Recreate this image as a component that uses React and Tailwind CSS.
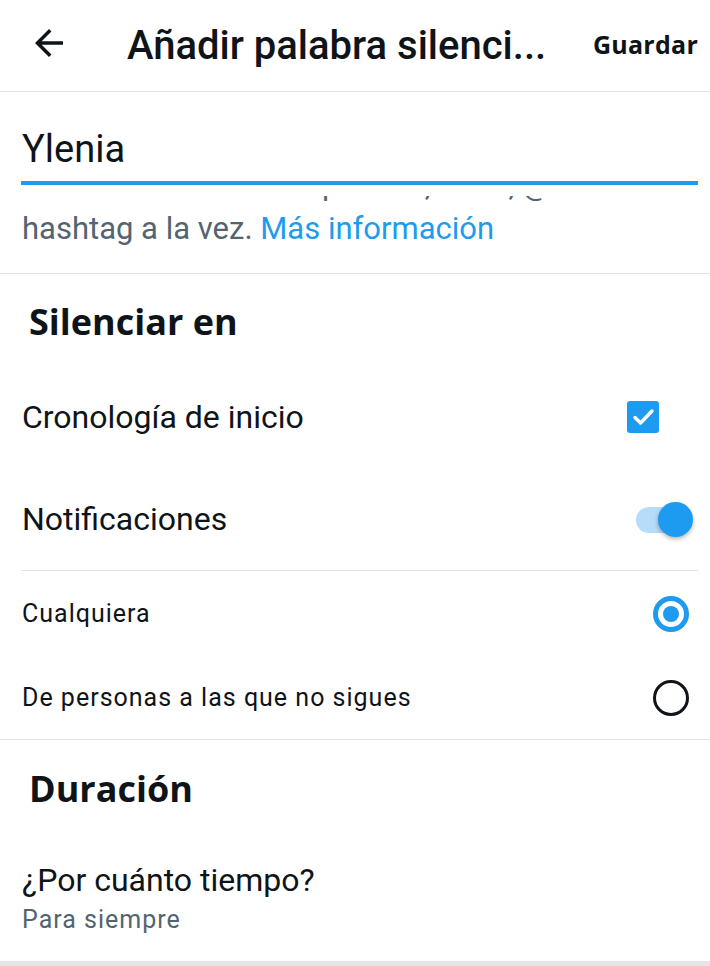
export default function App() {
  return (
    <div className="w-[710px] h-[966px] bg-white flex flex-col overflow-hidden text-[#0f1419] font-['Roboto',sans-serif]">
      <header className="h-[92px] shrink-0 flex items-center border-b border-[#dfe3e6]">
        <svg className="ml-[28px] mb-[5px] w-[42px] h-[42px] shrink-0" viewBox="0 0 24 24">
          <path d="M20 11H7.83l5.59-5.59L12 4l-8 8 8 8 1.41-1.41L7.83 13H20v-2z" fill="#0f1419" />
        </svg>
        <h1 className="ml-[57px] text-[40px] font-medium leading-[48px] whitespace-nowrap">Añadir palabra silenci...</h1>
        <button className="ml-auto mr-[12px] mb-[4px] font-['Open_Sans',sans-serif] font-bold text-[25px] leading-[34px] tracking-[0.01em]">Guardar</button>
      </header>

      <div className="border-b border-[#dfe3e6]">
        <div className="pt-[34px] pl-[22px] text-[38px] leading-[46px]">Ylenia</div>
        <div className="mt-[9px] ml-[21px] mr-[12px] h-[4px] bg-[#1d9bf0]" />
        <div className="mt-[11px] h-[77px] overflow-hidden pl-[22px] text-[31px] leading-[44px] text-[#536471]">
          <div className="-mt-[33px] pl-[7px] whitespace-nowrap">Puedes silenciar una palabra, frase,  @usuario o</div>
          <div className="whitespace-nowrap">
            hashtag a la vez. <span className="text-[#1d9bf0]">Más información</span>
          </div>
        </div>
      </div>

      <div className="pt-[24px] pb-[19px] pl-[29px] font-['Open_Sans',sans-serif] font-bold text-[36px] leading-[48px]">Silenciar en</div>

      <div className="h-[103px] flex items-center pl-[22px] pr-[51px]">
        <span className="text-[32px] leading-[40px]">Cronología de inicio</span>
        <div className="ml-auto w-[32px] h-[32px] rounded-[3px] bg-[#1d9bf0] flex items-center justify-center">
          <svg width="32" height="32" viewBox="0 0 32 32">
            <path d="M8 16.5l5.5 5.5L25 10" fill="none" stroke="#fff" strokeWidth="3.4" strokeLinecap="round" strokeLinejoin="round" />
          </svg>
        </div>
      </div>

      <div className="h-[102px] flex items-center pl-[22px] pr-[17px]">
        <span className="text-[32px] leading-[40px]">Notificaciones</span>
        <div className="ml-auto relative w-[57px] h-[35px]">
          <div className="absolute left-0 top-[5px] w-[51px] h-[26px] rounded-full bg-[#b5dcf9]" />
          <div className="absolute right-0 top-0 w-[35px] h-[35px] rounded-full bg-[#1d9bf0] shadow-[0_2px_4px_rgba(0,0,0,0.3)]" />
        </div>
      </div>

      <div className="ml-[21px] mr-[12px] h-px bg-[#dfe3e6]" />

      <div className="h-[85px] flex items-center pl-[22px] pr-[21px]">
        <span className="text-[25px] leading-[34px] tracking-[0.04em]">Cualquiera</span>
        <div className="ml-auto w-[36px] h-[36px] rounded-full border-[5px] border-[#1d9bf0] flex items-center justify-center">
          <div className="w-[16px] h-[16px] rounded-full bg-[#1d9bf0]" />
        </div>
      </div>

      <div className="h-[83px] flex items-center pl-[22px] pr-[21px]">
        <span className="text-[25px] leading-[34px] tracking-[0.04em]">De personas a las que no sigues</span>
        <div className="ml-auto w-[36px] h-[36px] rounded-full border-[3px] border-[#0f1419]" />
      </div>

      <div className="border-t border-[#dfe3e6]">
        <div className="pt-[25px] pl-[29px] font-['Open_Sans',sans-serif] font-bold text-[36px] leading-[48px]">Duración</div>
        <div className="mt-[47px] pl-[22px] text-[32px] leading-[40px]">¿Por cuánto tiempo?</div>
        <div className="mt-[3px] pl-[22px] text-[25px] leading-[34px] tracking-[0.04em] text-[#536471]">Para siempre</div>
      </div>

      <div className="mt-auto h-[5px] shrink-0 bg-[#e5e5e5]" />
    </div>
  );
}
